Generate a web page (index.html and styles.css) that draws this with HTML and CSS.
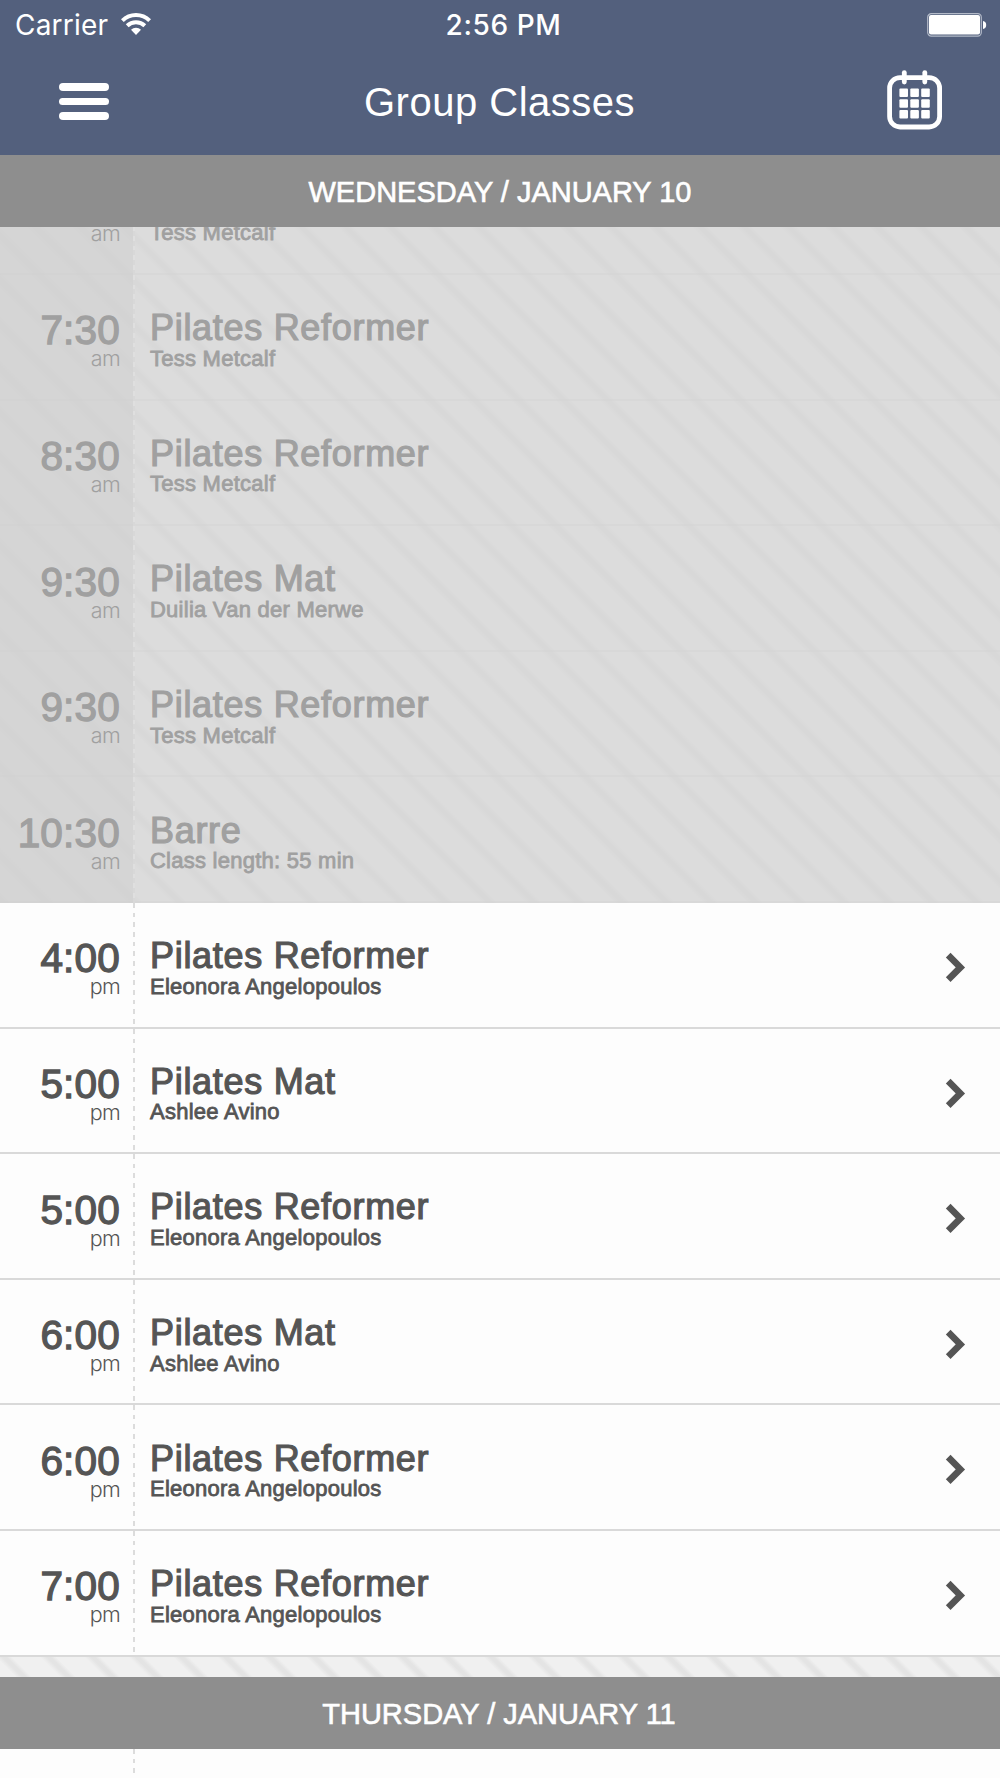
FILE: index.html
```html
<!DOCTYPE html>
<html lang="en">
<head>
    <meta charset="UTF-8">
    <meta name="viewport" content="width=device-width, initial-scale=1.0">
    <title>Group Classes</title>
    <link rel="stylesheet" href="styles.css">
</head>
<body>

    <!-- Top Bar -->
    <header class="top">
        <div class="status-bar">
            <div class="carrier">
                <span>Carrier</span>
                <svg class="wifi" width="30" height="23" viewBox="0 0 30 23">
                    <g fill="none" stroke="#fff" stroke-width="4">
                        <path d="M1.4 7.6 A19.4 19.4 0 0 1 28.6 7.6"/>
                        <path d="M6.2 12.8 A12.6 12.6 0 0 1 23.8 12.8"/>
                    </g>
                    <path d="M15 22 L10 16.8 A7.2 7.2 0 0 1 20 16.8 Z" fill="#fff"/>
                </svg>
            </div>
            <div class="clock">2:56 PM</div>
            <svg class="battery" width="60" height="24" viewBox="0 0 60 24">
                <rect x="0.7" y="0.7" width="53.6" height="22.4" rx="3.6" fill="none" stroke="#b3bac8" stroke-width="1.2"/>
                <rect x="2" y="2" width="51" height="19.6" rx="2" fill="#fff"/>
                <path d="M56 8 Q59.2 8.6 59.2 12 Q59.2 15.4 56 16 Z" fill="#fff"/>
            </svg>
        </div>
        <div class="nav">
            <div class="menu">
                <span></span>
                <span></span>
                <span></span>
            </div>
            <h1>Group Classes</h1>
            <svg class="calendar" width="56" height="60" viewBox="0 0 56 60">
                <rect x="2.6" y="7.6" width="50" height="49.4" rx="10.5" fill="none" stroke="#fff" stroke-width="4.8"/>
                <g stroke="#fff" stroke-width="4.8" stroke-linecap="round">
                    <path d="M17.3 2.6 V12"/>
                    <path d="M37.8 2.6 V12"/>
                </g>
                <g fill="#fff">
                    <rect x="12.4" y="18.4" width="8.6" height="8.6" rx="1"/>
                    <rect x="23.3" y="18.4" width="8.6" height="8.6" rx="1"/>
                    <rect x="34.2" y="18.4" width="8.6" height="8.6" rx="1"/>
                    <rect x="12.4" y="29.2" width="8.6" height="8.6" rx="1"/>
                    <rect x="23.3" y="29.2" width="8.6" height="8.6" rx="1"/>
                    <rect x="34.2" y="29.2" width="8.6" height="8.6" rx="1"/>
                    <rect x="12.4" y="40" width="8.6" height="8.6" rx="1"/>
                    <rect x="23.3" y="40" width="8.6" height="8.6" rx="1"/>
                    <rect x="34.2" y="40" width="8.6" height="8.6" rx="1"/>
                </g>
            </svg>
        </div>
    </header>

    <h2 class="day">WEDNESDAY / JANUARY 10</h2>

    <!-- Class List -->
    <main class="schedule">
        <div class="classes" id="wednesday"></div>
        <h2 class="day next">THURSDAY / JANUARY 11</h2>
        <div class="classes" id="thursday"></div>
    </main>

    <script src="script.js"></script>

</body>
</html>
```

FILE: script.js
```js
const classes = [
    ["6:30", "am", "Pilates Reformer", "Tess Metcalf", true],
    ["7:30", "am", "Pilates Reformer", "Tess Metcalf", true],
    ["8:30", "am", "Pilates Reformer", "Tess Metcalf", true],
    ["9:30", "am", "Pilates Mat", "Duilia Van der Merwe", true],
    ["9:30", "am", "Pilates Reformer", "Tess Metcalf", true],
    ["10:30", "am", "Barre", "Class length: 55 min", true],
    ["4:00", "pm", "Pilates Reformer", "Eleonora Angelopoulos"],
    ["5:00", "pm", "Pilates Mat", "Ashlee Avino"],
    ["5:00", "pm", "Pilates Reformer", "Eleonora Angelopoulos"],
    ["6:00", "pm", "Pilates Mat", "Ashlee Avino"],
    ["6:00", "pm", "Pilates Reformer", "Eleonora Angelopoulos"],
    ["7:00", "pm", "Pilates Reformer", "Eleonora Angelopoulos"]
];

const arrow = `<svg class="arrow" width="22" height="34" viewBox="0 0 22 34">
    <path d="M4.2 4.2 L16.4 16.4 L4.2 28.6" fill="none" stroke="#555" stroke-width="6.6"/>
</svg>`;

function buildRow([time, half, name, info, past]) {
    return `<div class="row ${past ? "past" : ""}">
        <div class="time">
            <div class="hour">${time}</div>
            <div class="half">${half}</div>
        </div>
        <div class="dashes"></div>
        <div class="details">
            <div class="name">${name}</div>
            <div class="info">${info}</div>
        </div>
        ${past ? "" : arrow}
    </div>`;
}

document.getElementById("wednesday").innerHTML = classes.map(buildRow).join("");

// Next day starts with an empty row, cut off by the screen
document.getElementById("thursday").innerHTML =
    `<div class="row"><div class="time"></div><div class="dashes"></div></div>`;
```

FILE: styles.css
```css
/* General Styles */
* {
    box-sizing: border-box;
}

body {
    margin: 0;
    width: 1000px;
    height: 1778px;
    overflow: hidden;
    display: flex;
    flex-direction: column;
    font-family: "Liberation Sans", Arial, sans-serif;
    background-color: #f0f0f0;
}

h1, h2 {
    margin: 0;
    font-weight: normal;
}

/* Top Bar */
.top {
    height: 155px;
    flex: none;
    background-color: #53607d;
    color: white;
}

.status-bar {
    display: grid;
    grid-template-columns: 1fr auto 1fr;
    height: 50px;
    padding: 0 13px 0 15px;
    align-items: center;
    font-family: Inter, sans-serif;
    font-size: 28px;
}

.carrier {
    display: flex;
    align-items: center;
    gap: 13px;
    letter-spacing: 0.2px;
}

.wifi {
    margin-bottom: 2px;
}

.clock {
    font-weight: 500;
    letter-spacing: 0.6px;
    padding-left: 5px;
}

.battery {
    justify-self: end;
}

.nav {
    display: flex;
    align-items: center;
    justify-content: space-between;
    height: 105px;
    padding: 0 57px 6px 59px;
}

.menu {
    display: flex;
    flex-direction: column;
    gap: 7px;
    width: 50px;
    padding-top: 4px;
}

.menu span {
    height: 7.6px;
    border-radius: 4px;
    background-color: white;
}

.nav h1 {
    font-size: 40px;
    letter-spacing: 0.5px;
    padding: 5px 0 0 3px;
}

/* Day Header */
.day {
    flex: none;
    height: 72px;
    line-height: 74px;
    text-align: center;
    font-size: 29px;
    background-color: #8e8e8e;
    color: white;
    -webkit-text-stroke: 0.6px white;
}

.day.next {
    margin-top: 20px;
    padding-right: 2px;
}

/* Striped background behind the rows */
.schedule {
    flex: 1;
    overflow: hidden;
    background-color: #f0f0f0;
    background-image: repeating-linear-gradient(45deg,
        #f0f0f0 0, #f0f0f0 20px,
        #e4e4e4 24.6px, #e4e4e4 27.4px,
        #f0f0f0 31.32px);
}

#wednesday {
    margin-top: -77.6px;
}

/* Rows */
.row {
    display: flex;
    height: 125.6px;
    background-color: #fdfdfd;
    border-bottom: 2px solid #d9d9d9;
    color: #555;
    --ink: #555;
}

.time {
    width: 133px;
    padding: 38.4px 13px 0 0;
    text-align: right;
}

.hour {
    font-size: 40.5px;
    line-height: 35px;
    letter-spacing: 0.2px;
    -webkit-text-stroke: 1.3px var(--ink);
}

.half {
    font-family: Inter, sans-serif;
    font-weight: 300;
    font-size: 21.5px;
    line-height: 21px;
    letter-spacing: -0.7px;
}

.dashes {
    width: 2.4px;
    height: 125.6px;
    background: repeating-linear-gradient(#dcdcdc 0, #dcdcdc 4.8px, transparent 4.8px, transparent 9.66px);
}

.details {
    flex: 1;
    padding: 35.3px 0 0 14.6px;
}

.name {
    font-size: 36px;
    line-height: 36px;
    letter-spacing: 0.7px;
    -webkit-text-stroke: 1.2px var(--ink);
}

.info {
    margin-top: 1.6px;
    font-size: 22px;
    line-height: 22px;
    letter-spacing: 0.25px;
    -webkit-text-stroke: 0.8px var(--ink);
}

.arrow {
    margin: 48px 34px 0 0;
}

/* Past classes */
.past {
    background-color: rgba(211, 211, 211, 0.7);
    border-bottom-color: rgba(210, 210, 210, 0.3);
    color: #a0a0a0;
    --ink: #a0a0a0;
}

.past .time {
    height: 125.6px;
    background-color: rgba(206, 206, 206, 0.5);
}

.past .dashes {
    background: repeating-linear-gradient(#dfdfdf 0, #dfdfdf 4.8px, #d8d8d8 4.8px, #d8d8d8 9.66px);
}
```
